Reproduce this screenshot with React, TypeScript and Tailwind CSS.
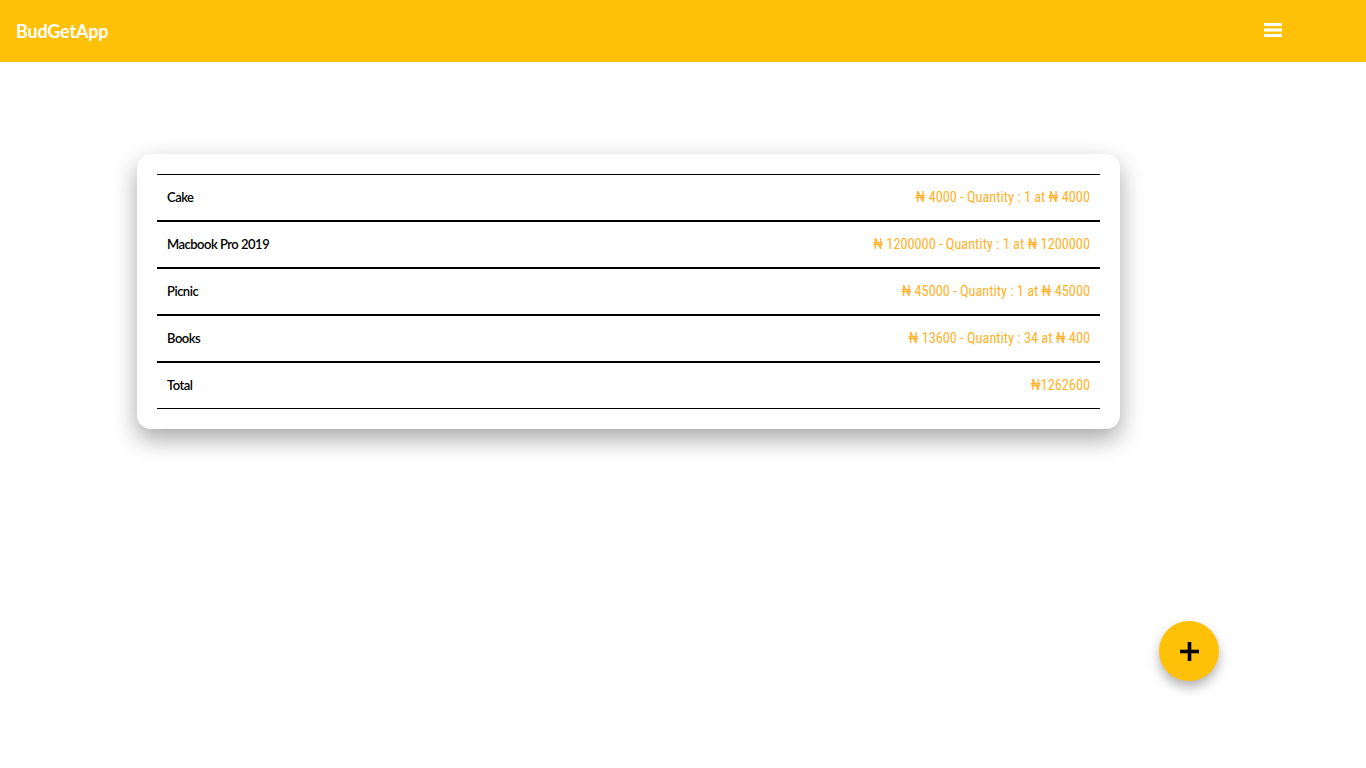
import React from "react";

const rows = [
  { name: "Cake", value: "₦ 4000 - Quantity : 1 at ₦ 4000" },
  { name: "Macbook Pro 2019", value: "₦ 1200000 - Quantity : 1 at ₦ 1200000" },
  { name: "Picnic", value: "₦ 45000 - Quantity : 1 at ₦ 45000" },
  { name: "Books", value: "₦ 13600 - Quantity : 34 at ₦ 400" },
  { name: "Total", value: "₦1262600" },
];

export default function App() {
  return (
    <div className="min-h-[768px] bg-white relative" style={{ fontFamily: "Lato, 'Noto Sans', sans-serif" }}>
      <header className="h-[62px] bg-[#FFC107] flex items-center justify-between pl-4 pr-[84px]">
        <span className="text-white font-bold text-[18px] tracking-[-0.2px]">BudGetApp</span>
        <svg width="18" height="16" viewBox="0 0 18 16" className="mt-[-2px]">
          <rect x="0" y="1" width="18" height="3" rx="0.5" fill="#fff" />
          <rect x="0" y="6.5" width="18" height="3" rx="0.5" fill="#fff" />
          <rect x="0" y="12" width="18" height="3" rx="0.5" fill="#fff" />
        </svg>
      </header>

      <div className="pt-[92px] pl-[137px]">
        <div className="w-[983px] bg-white rounded-[14px] shadow-[0_10px_25px_rgba(0,0,0,0.35)] p-5">
          <div className="border-t border-black">
            {rows.map((r, i) => (
              <div
                key={r.name}
                className={`flex items-center justify-between px-[10px] ${i === rows.length - 1 ? "border-b border-black h-[46px]" : "border-b-2 border-black h-[47px]"}`}
              >
                <span className="text-[13px] font-semibold text-black tracking-[-0.5px]">{r.name}</span>
                <span
                  className="text-[14.3px] text-[#FFB22C]"
                  style={{ fontFamily: "'Liberation Sans Narrow', 'Roboto Condensed', Roboto, sans-serif", fontStretch: "condensed" }}
                >
                  {r.value}
                </span>
              </div>
            ))}
          </div>
        </div>
      </div>

      <button className="absolute left-[1159px] top-[621px] w-[60px] h-[60px] rounded-full bg-[#FFC107] shadow-[0_6px_12px_rgba(0,0,0,0.3)] flex items-center justify-center">
        <svg width="19" height="19" viewBox="0 0 19 19">
          <rect x="7.7" y="0" width="3.6" height="19" fill="#000" />
          <rect x="0" y="7.7" width="19" height="3.6" fill="#000" />
        </svg>
      </button>
    </div>
  );
}
